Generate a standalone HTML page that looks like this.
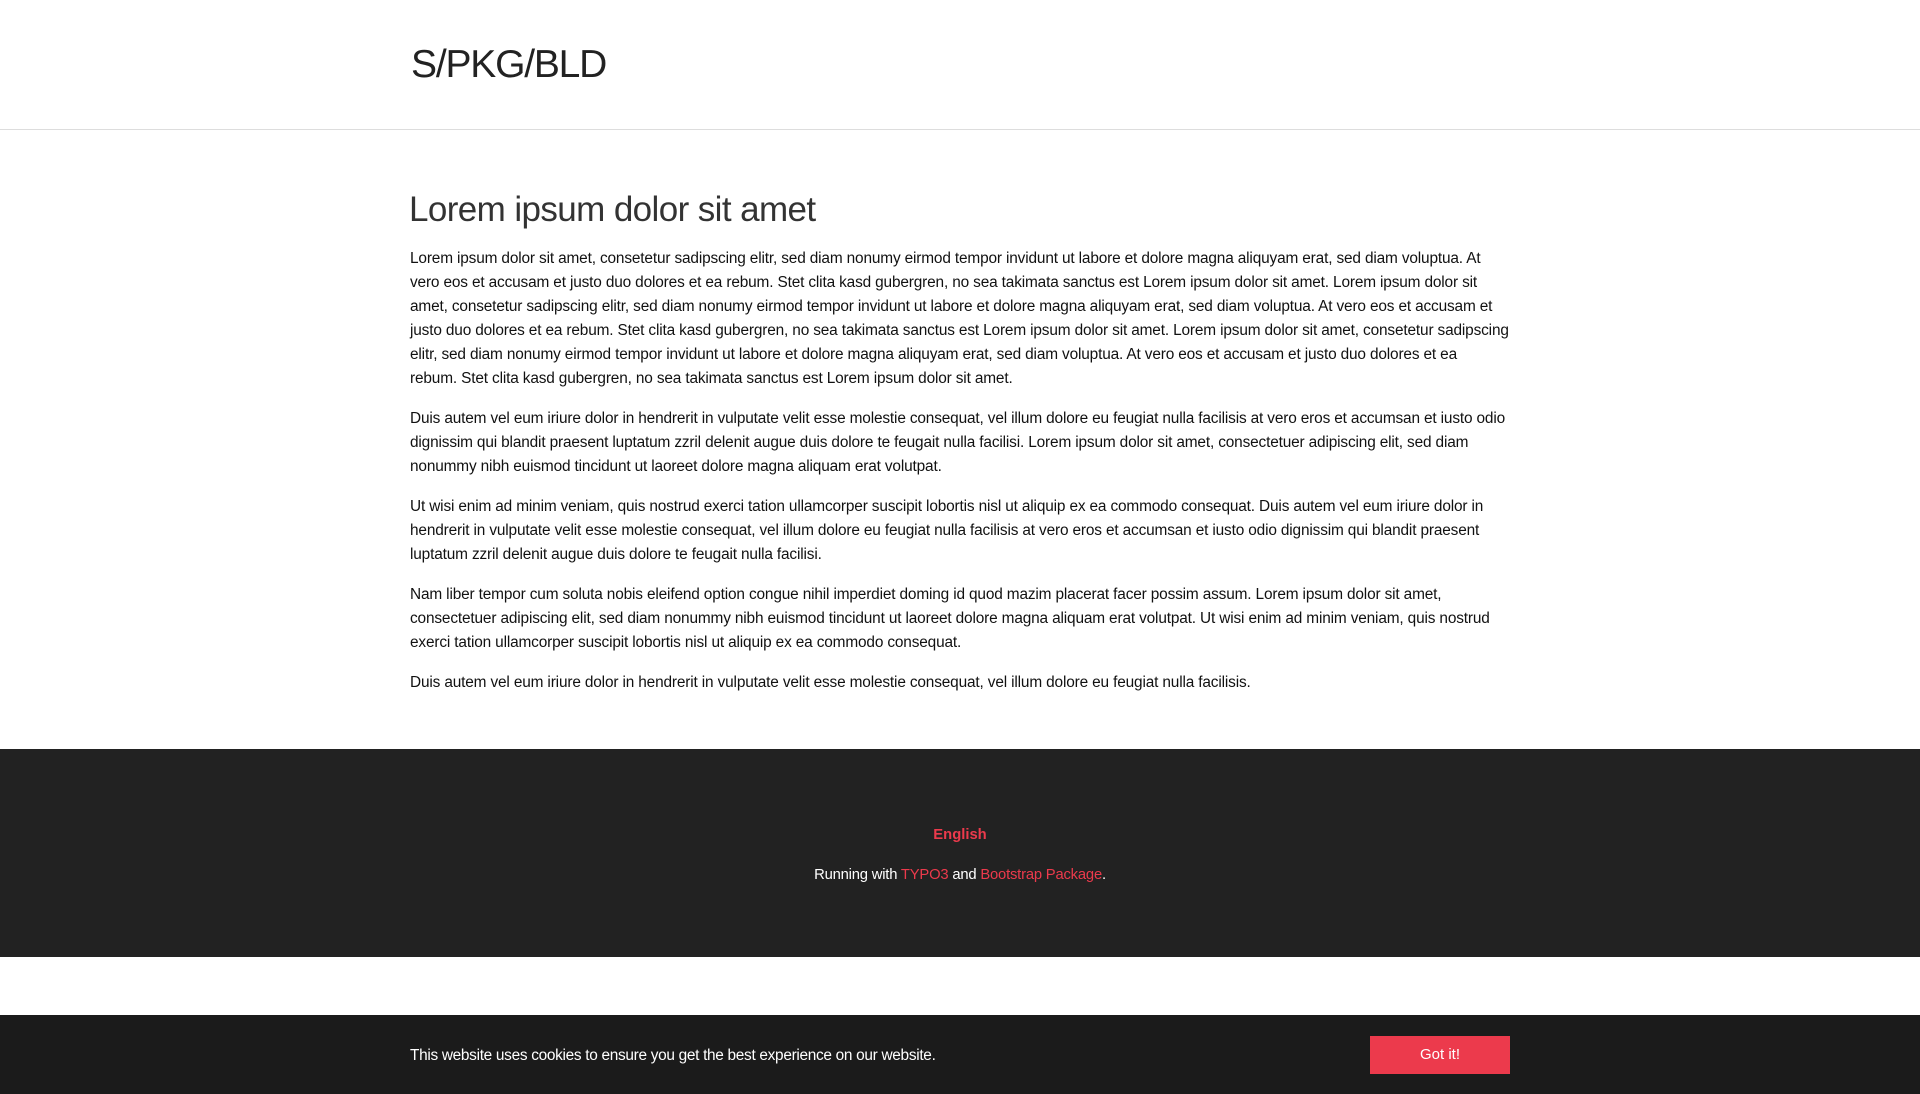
<!DOCTYPE html>
<html><head><meta charset="utf-8">
<style>
*{margin:0;padding:0;box-sizing:border-box}
body{width:1920px;height:1094px;overflow:hidden;background:#fff;font-family:"Liberation Sans",sans-serif;color:#111;position:relative}
.hdr{height:130px;border-bottom:1px solid #ddd;position:relative}
.logo{position:absolute;left:411px;top:43px;font-size:39px;color:#222;letter-spacing:-1.2px;font-weight:300}
h1{position:absolute;left:409px;top:190px;font-size:35px;font-weight:normal;color:#333;letter-spacing:-0.6px}
.txt{position:absolute;left:410px;top:247px;width:1140px;font-size:15.4px;line-height:24px;letter-spacing:-0.15px}
.txt p{margin-bottom:16px;white-space:nowrap}
.foot{position:absolute;left:0;top:749px;width:1920px;height:208px;background:#222;text-align:center;color:#fff;font-size:14.8px}
.foot .en{position:absolute;top:78px;width:100%;color:#ec3a4c;font-weight:bold}
.foot .run{position:absolute;top:118px;width:100%;letter-spacing:-0.2px}
.r{color:#ec3a4c}
.ck{position:absolute;left:0;top:1015px;width:1920px;height:79px;background:#1b1b1b;color:#fff}
.ck span{position:absolute;left:410px;top:32px;font-size:15.4px;letter-spacing:-0.3px}
.btn{position:absolute;left:1370px;top:21px;width:140px;height:38px;background:#ec3a4c;color:#fff;font-size:15px;text-align:center;line-height:38px}
</style></head><body>
<div class="hdr"><div class="logo">S/PKG/BLD</div></div>
<h1>Lorem ipsum dolor sit amet</h1>
<div class="txt">
<p>Lorem ipsum dolor sit amet, consetetur sadipscing elitr, sed diam nonumy eirmod tempor invidunt ut labore et dolore magna aliquyam erat, sed diam voluptua. At<br>vero eos et accusam et justo duo dolores et ea rebum. Stet clita kasd gubergren, no sea takimata sanctus est Lorem ipsum dolor sit amet. Lorem ipsum dolor sit<br>amet, consetetur sadipscing elitr, sed diam nonumy eirmod tempor invidunt ut labore et dolore magna aliquyam erat, sed diam voluptua. At vero eos et accusam et<br>justo duo dolores et ea rebum. Stet clita kasd gubergren, no sea takimata sanctus est Lorem ipsum dolor sit amet. Lorem ipsum dolor sit amet, consetetur sadipscing<br>elitr, sed diam nonumy eirmod tempor invidunt ut labore et dolore magna aliquyam erat, sed diam voluptua. At vero eos et accusam et justo duo dolores et ea<br>rebum. Stet clita kasd gubergren, no sea takimata sanctus est Lorem ipsum dolor sit amet.</p>
<p>Duis autem vel eum iriure dolor in hendrerit in vulputate velit esse molestie consequat, vel illum dolore eu feugiat nulla facilisis at vero eros et accumsan et iusto odio<br>dignissim qui blandit praesent luptatum zzril delenit augue duis dolore te feugait nulla facilisi. Lorem ipsum dolor sit amet, consectetuer adipiscing elit, sed diam<br>nonummy nibh euismod tincidunt ut laoreet dolore magna aliquam erat volutpat.</p>
<p>Ut wisi enim ad minim veniam, quis nostrud exerci tation ullamcorper suscipit lobortis nisl ut aliquip ex ea commodo consequat. Duis autem vel eum iriure dolor in<br>hendrerit in vulputate velit esse molestie consequat, vel illum dolore eu feugiat nulla facilisis at vero eros et accumsan et iusto odio dignissim qui blandit praesent<br>luptatum zzril delenit augue duis dolore te feugait nulla facilisi.</p>
<p>Nam liber tempor cum soluta nobis eleifend option congue nihil imperdiet doming id quod mazim placerat facer possim assum. Lorem ipsum dolor sit amet,<br>consectetuer adipiscing elit, sed diam nonummy nibh euismod tincidunt ut laoreet dolore magna aliquam erat volutpat. Ut wisi enim ad minim veniam, quis nostrud<br>exerci tation ullamcorper suscipit lobortis nisl ut aliquip ex ea commodo consequat.</p>
<p>Duis autem vel eum iriure dolor in hendrerit in vulputate velit esse molestie consequat, vel illum dolore eu feugiat nulla facilisis.</p>
</div>
<div class="foot">
<div class="en">English</div>
<div class="run">Running with <span class="r">TYPO3</span> and <span class="r">Bootstrap Package</span>.</div>
</div>
<div class="ck"><span>This website uses cookies to ensure you get the best experience on our website.</span><div class="btn">Got it!</div></div>
</body></html>
